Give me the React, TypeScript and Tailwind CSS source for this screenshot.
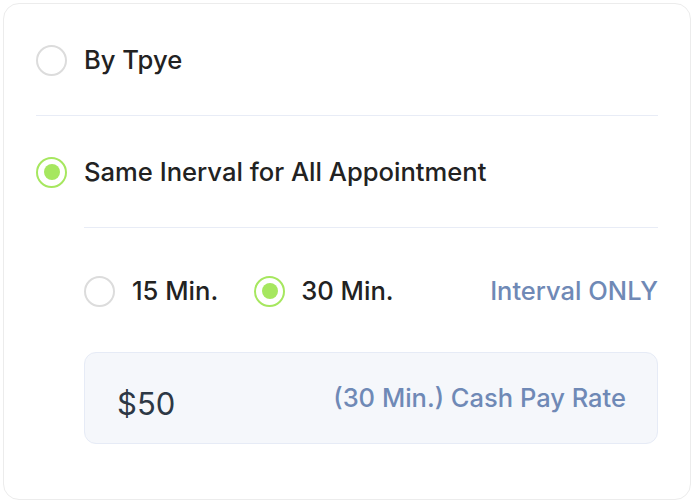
import React from "react";

function Radio({ checked }: { checked?: boolean }) {
  return checked ? (
    <span className="flex h-[31px] w-[31px] shrink-0 items-center justify-center rounded-full border-2 border-[#a6e75f]">
      <span className="h-[16px] w-[16px] rounded-full bg-[#a6e75f]" />
    </span>
  ) : (
    <span className="h-[31px] w-[31px] shrink-0 rounded-full border-2 border-[#dcdcdc]" />
  );
}

export default function App() {
  return (
    <div className="bg-white p-[3px] font-['Inter',sans-serif]">
      <div className="flex h-[497px] w-[688px] flex-col rounded-[16px] border border-[#ececec] px-[32px] pt-[41px]">
        <div className="flex h-[30px] items-center gap-[17px]">
          <Radio />
          <span className="text-[25.6px] font-medium text-[#222]">By Tpye</span>
        </div>
        <div className="mt-[40px] h-px bg-[#e8ecf6]" />
        <div className="mt-[41px] flex h-[30px] items-center gap-[17px]">
          <Radio checked />
          <span className="text-[25.6px] font-medium text-[#222]">Same Inerval for All Appointment</span>
        </div>
        <div className="ml-[48px] flex flex-col">
          <div className="mt-[40px] h-px bg-[#e8ecf6]" />
          <div className="mt-[48px] flex h-[30px] items-center">
            <Radio />
            <span className="ml-[17px] text-[25.6px] font-medium text-[#222]">15 Min.</span>
            <span className="ml-[36px]">
              <Radio checked />
            </span>
            <span className="ml-[16px] text-[25.6px] font-medium text-[#222]">30 Min.</span>
            <span className="ml-auto text-[25.5px] font-medium text-[#6f89b6]">Interval ONLY</span>
          </div>
          <div className="mt-[46px] flex h-[92px] items-center justify-between rounded-[12px] border border-[#e6ebf6] bg-[#f5f7fb] pl-[32px] pr-[31px]">
            <span className="pt-[13px] text-[31px] text-[#2d3845]">$50</span>
            <span className="text-[25.5px] font-medium text-[#6f89b6]">(30 Min.) Cash Pay Rate</span>
          </div>
        </div>
      </div>
    </div>
  );
}
